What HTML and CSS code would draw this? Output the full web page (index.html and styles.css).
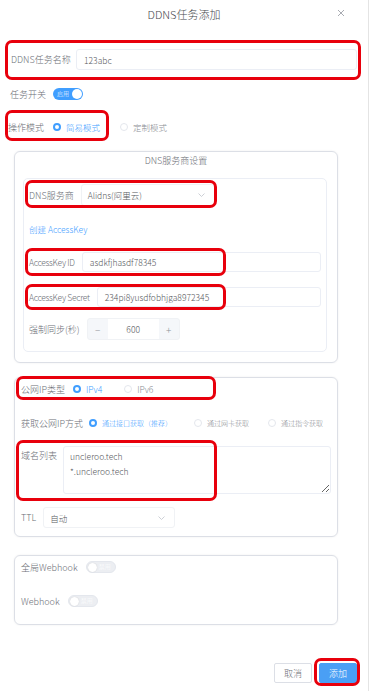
FILE: index.html
```html
<!DOCTYPE html>
<html lang="zh-CN">
<head>
  <meta charset="UTF-8">
  <title>DDNS任务添加</title>
  <link rel="stylesheet" href="styles.css">
</head>
<body>
  <div class="dialog">
    <div class="dialog-header">
      <span class="dialog-title">DDNS任务添加</span>
      <span class="close-btn">
        <svg width="8" height="8" viewBox="0 0 8 8"><path d="M1 1L7 7M7 1L1 7" stroke="#a8abb2" stroke-width="1" fill="none"/></svg>
      </span>
    </div>

    <div class="row row-name">
      <label class="label label-name">DDNS任务名称</label>
      <div class="input">123abc</div>
    </div>

    <div class="row row-switch">
      <label class="label">任务开关</label>
      <span class="switch on"><span class="switch-text">启用</span><span class="knob"></span></span>
    </div>

    <div class="row row-mode">
      <label class="label">操作模式</label>
      <span class="radio checked"></span><span class="radio-text active">简易模式</span>
      <span class="radio second"></span><span class="radio-text">定制模式</span>
    </div>

    <div class="group group-dns">
      <div class="group-title">DNS服务商设置</div>
      <div class="inner">
        <div class="row row-provider">
          <label class="label">DNS服务商</label>
          <div class="select select-provider">
            <span>Alidns(阿里云)</span>
            <svg width="7" height="4" viewBox="0 0 7 4"><path d="M0.5 0.5L3.5 3.5L6.5 0.5" stroke="#c0c4cc" stroke-width="0.8" fill="none"/></svg>
          </div>
        </div>
        <div class="row row-link">
          <a class="link">创建 AccessKey</a>
        </div>
        <div class="row row-key">
          <label class="label label-latin">AccessKey ID</label>
          <div class="input">asdkfjhasdf78345</div>
        </div>
        <div class="row row-secret">
          <label class="label label-latin">AccessKey Secret</label>
          <div class="input">234pi8yusdfobhjga8972345</div>
        </div>
        <div class="row row-sync">
          <label class="label">强制同步(秒)</label>
          <div class="number">
            <span class="num-btn">&minus;</span>
            <span class="num-value">600</span>
            <span class="num-btn">+</span>
          </div>
        </div>
      </div>
    </div>

    <div class="group group-ip">
      <div class="row row-iptype">
        <label class="label">公网IP类型</label>
        <span class="radio checked"></span><span class="radio-text active">IPv4</span>
        <span class="radio second"></span><span class="radio-text">IPv6</span>
      </div>
      <div class="row row-getip">
        <label class="label">获取公网IP方式</label>
        <span class="radio checked"></span><span class="radio-text small active">通过接口获取（推荐）</span>
        <span class="radio opt2"></span><span class="radio-text small">通过网卡获取</span>
        <span class="radio opt3"></span><span class="radio-text small">通过指令获取</span>
      </div>
      <div class="row row-domains">
        <label class="label">域名列表</label>
        <textarea class="textarea" readonly>uncleroo.tech
*.uncleroo.tech</textarea>
      </div>
      <div class="row row-ttl">
        <label class="label">TTL</label>
        <div class="select select-ttl">
          <span>自动</span>
          <svg width="7" height="4" viewBox="0 0 7 4"><path d="M0.5 0.5L3.5 3.5L6.5 0.5" stroke="#c0c4cc" stroke-width="0.8" fill="none"/></svg>
        </div>
      </div>
    </div>

    <div class="group group-hook">
      <div class="row row-hook1">
        <label class="label">全局Webhook</label>
        <span class="switch off"><span class="knob"></span><span class="switch-text">禁用</span></span>
      </div>
      <div class="row row-hook2">
        <label class="label">Webhook</label>
        <span class="switch off"><span class="knob"></span><span class="switch-text">禁用</span></span>
      </div>
    </div>

    <div class="footer">
      <button class="btn">取消</button>
      <button class="btn btn-primary">添加</button>
    </div>

    <!-- red annotation boxes -->
    <div class="mark mark-name"></div>
    <div class="mark mark-mode"></div>
    <div class="mark mark-provider"></div>
    <div class="mark mark-key"></div>
    <div class="mark mark-secret"></div>
    <div class="mark mark-iptype"></div>
    <div class="mark mark-domains"></div>
    <div class="mark mark-submit"></div>
  </div>
</body>
</html>
```

FILE: styles.css
```css
body {
  margin: 0;
  background: #fff;
  font-family: "Noto Sans CJK SC", "Noto Sans", sans-serif;
  font-weight: 300;
  color: #6b6e75;
}

.dialog {
  position: relative;
  width: 369px;
  height: 691px;
  box-sizing: border-box;
  border-right: 1px solid #e4e4e4;
  overflow: hidden;
}

.dialog-header {
  height: 28px;
  display: flex;
  align-items: center;
  justify-content: center;
  position: relative;
}
.dialog-title {
  font-size: 11px;
  color: #45474d;
}
.close-btn {
  position: absolute;
  right: 23px;
  top: 9px;
  display: flex;
}

.row {
  display: flex;
  align-items: center;
}
.label {
  font-size: 9px;
  color: #6b6e75;
  white-space: nowrap;
  margin-right: 7px;
}
.label-latin {
  font-size: 8.5px;
  letter-spacing: -0.3px;
}

.input {
  flex: 1;
  height: 21px;
  box-sizing: border-box;
  border: 1px solid #ebeef5;
  border-radius: 3px;
  background: #fff;
  font-size: 8.5px;
  color: #55575c;
  display: flex;
  align-items: center;
  padding-left: 7px;
}

/* name row */
.row-name {
  margin-top: 21px;
  height: 21px;
  padding: 0 11px;
}
.row-name .label {
  width: 65px;
  margin-right: 0;
}

/* switch */
.row-switch {
  margin-top: 18px;
  height: 12px;
  padding-left: 10px;
}
.switch {
  width: 30px;
  height: 12px;
  border-radius: 6px;
  box-sizing: border-box;
  display: flex;
  align-items: center;
  justify-content: space-between;
  padding: 0 1px;
}
.switch.on {
  background: #409eff;
  padding-left: 4px;
}
.switch.off {
  background: #eceef2;
  border: 1px solid #e4e7ed;
  padding-right: 4px;
}
.switch-text {
  font-size: 6px;
  color: #fff;
  line-height: 1;
}
.knob {
  width: 10px;
  height: 10px;
  border-radius: 50%;
  background: #fff;
}
.switch.off .knob {
  width: 9px;
  height: 9px;
  box-shadow: 0 0 1px rgba(0, 0, 0, 0.2);
}

/* radios */
.row-mode {
  margin-top: 20px;
  height: 14px;
  padding-left: 8px;
}
.row-mode .label {
  margin-right: 9px;
}
.radio {
  width: 8px;
  height: 8px;
  box-sizing: border-box;
  border-radius: 50%;
  border: 1px solid #e4e7ed;
  background: #fff;
  margin-right: 5px;
  flex-shrink: 0;
}
.radio.checked {
  border: 2.5px solid #409eff;
}
.radio.second {
  margin-left: 20px;
}
.radio-text {
  font-size: 8.5px;
  color: #8a8d93;
}
.radio-text.active {
  color: #409eff;
}
.radio-text.small {
  font-size: 7px;
}

/* groups */
.group {
  margin-left: 14px;
  width: 324px;
  box-sizing: border-box;
  border: 1px solid #dcdfe6;
  border-radius: 6px;
  box-shadow: 0 0 2px rgba(0, 0, 0, 0.08);
}
.group-dns {
  margin-top: 17px;
  height: 212px;
}
.group-title {
  height: 18px;
  line-height: 18px;
  text-align: center;
  font-size: 9px;
  color: #6b6e75;
}
.inner {
  margin: 8px 0 0 8px;
  width: 304px;
  height: 174px;
  box-sizing: border-box;
  border: 1px solid #ebeef5;
  border-radius: 5px;
  padding: 0 5px;
}

.row-provider {
  margin-top: 5px;
  height: 22px;
}
.select {
  height: 22px;
  box-sizing: border-box;
  border: 1px solid #f0f2f5;
  border-radius: 3px;
  display: flex;
  align-items: center;
  justify-content: space-between;
  padding: 0 9px 0 6px;
  font-size: 8.5px;
  color: #55575c;
}
.select-provider {
  width: 134px;
}
.row-link {
  margin-top: 17px;
  height: 12px;
}
.link {
  font-size: 8.5px;
  color: #409eff;
}
.row-key {
  margin-top: 17px;
  height: 20px;
}
.row-key .input,
.row-secret .input {
  height: 20px;
}
.row-secret {
  margin-top: 15px;
  height: 20px;
}
.row-sync {
  margin-top: 11px;
  height: 22px;
}
.number {
  width: 93px;
  height: 22px;
  display: flex;
  border-radius: 3px;
  background: #f5f7fa;
  border: 1px solid #f0f2f5;
  box-sizing: border-box;
}
.num-btn {
  width: 20px;
  display: flex;
  align-items: center;
  justify-content: center;
  font-size: 10px;
  color: #909399;
}
.num-value {
  flex: 1;
  background: #fff;
  display: flex;
  align-items: center;
  justify-content: center;
  font-size: 8.5px;
  color: #55575c;
}

/* ip group */
.group-ip {
  margin-top: 14px;
  height: 160px;
  padding: 4px 6px 0 6px;
}
.row-iptype {
  height: 14px;
}
.row-iptype .label {
  margin-right: 8px;
}
.row-iptype .radio.second {
  margin-left: 22px;
}
.row-getip {
  margin-top: 20px;
  height: 14px;
}
.row-getip .label {
  margin-right: 6px;
}
.radio.opt2 {
  margin-left: 22px;
}
.radio.opt3 {
  margin-left: 19px;
}
.row-domains {
  margin-top: 16px;
  align-items: flex-start;
}
.row-domains .label {
  margin-top: 3px;
  margin-right: 6px;
}
.textarea {
  flex: 1;
  height: 48px;
  box-sizing: border-box;
  border: 1px solid #ebeef5;
  border-radius: 3px;
  padding: 2px 6px;
  font-family: "Noto Sans CJK SC", "Noto Sans", sans-serif;
  font-weight: 300;
  font-size: 8.5px;
  line-height: 15px;
  color: #55575c;
  resize: vertical;
  outline: none;
}
.row-ttl {
  margin-top: 13px;
  height: 21px;
}
.select-ttl {
  width: 132px;
  height: 21px;
}

/* webhook group */
.group-hook {
  margin-top: 18px;
  height: 70px;
  padding: 5px 6px 0 6px;
}
.row-hook1,
.row-hook2 {
  height: 12px;
}
.row-hook1 .label,
.row-hook2 .label {
  margin-right: 8px;
}
.row-hook2 {
  margin-top: 22px;
}

/* footer */
.footer {
  margin-top: 38px;
  display: flex;
  justify-content: flex-end;
  gap: 7px;
  padding-right: 11px;
}
.btn {
  width: 38px;
  height: 20px;
  padding: 0;
  border: 1px solid #dcdfe6;
  border-radius: 2px;
  background: #fff;
  font-family: "Noto Sans CJK SC", sans-serif;
  font-weight: 300;
  font-size: 9px;
  color: #6b6e75;
}
.btn-primary {
  background: #4a9ff5;
  border-color: #4a9ff5;
  color: #fff;
}

/* annotations */
.mark {
  position: absolute;
  box-sizing: border-box;
  border: 3px solid #e8000c;
  border-radius: 7px;
  pointer-events: none;
}
.mark-name { left: 5px; top: 40px; width: 356px; height: 40px; }
.mark-mode { left: 5px; top: 110px; width: 104px; height: 31px; }
.mark-provider { left: 25px; top: 180px; width: 192px; height: 28px; }
.mark-key { left: 25px; top: 248px; width: 201px; height: 28px; }
.mark-secret { left: 25px; top: 284px; width: 201px; height: 26px; }
.mark-iptype { left: 16px; top: 376px; width: 200px; height: 24px; }
.mark-domains { left: 16px; top: 440px; width: 201px; height: 61px; }
.mark-submit { left: 314px; top: 658px; width: 46px; height: 28px; }
```
